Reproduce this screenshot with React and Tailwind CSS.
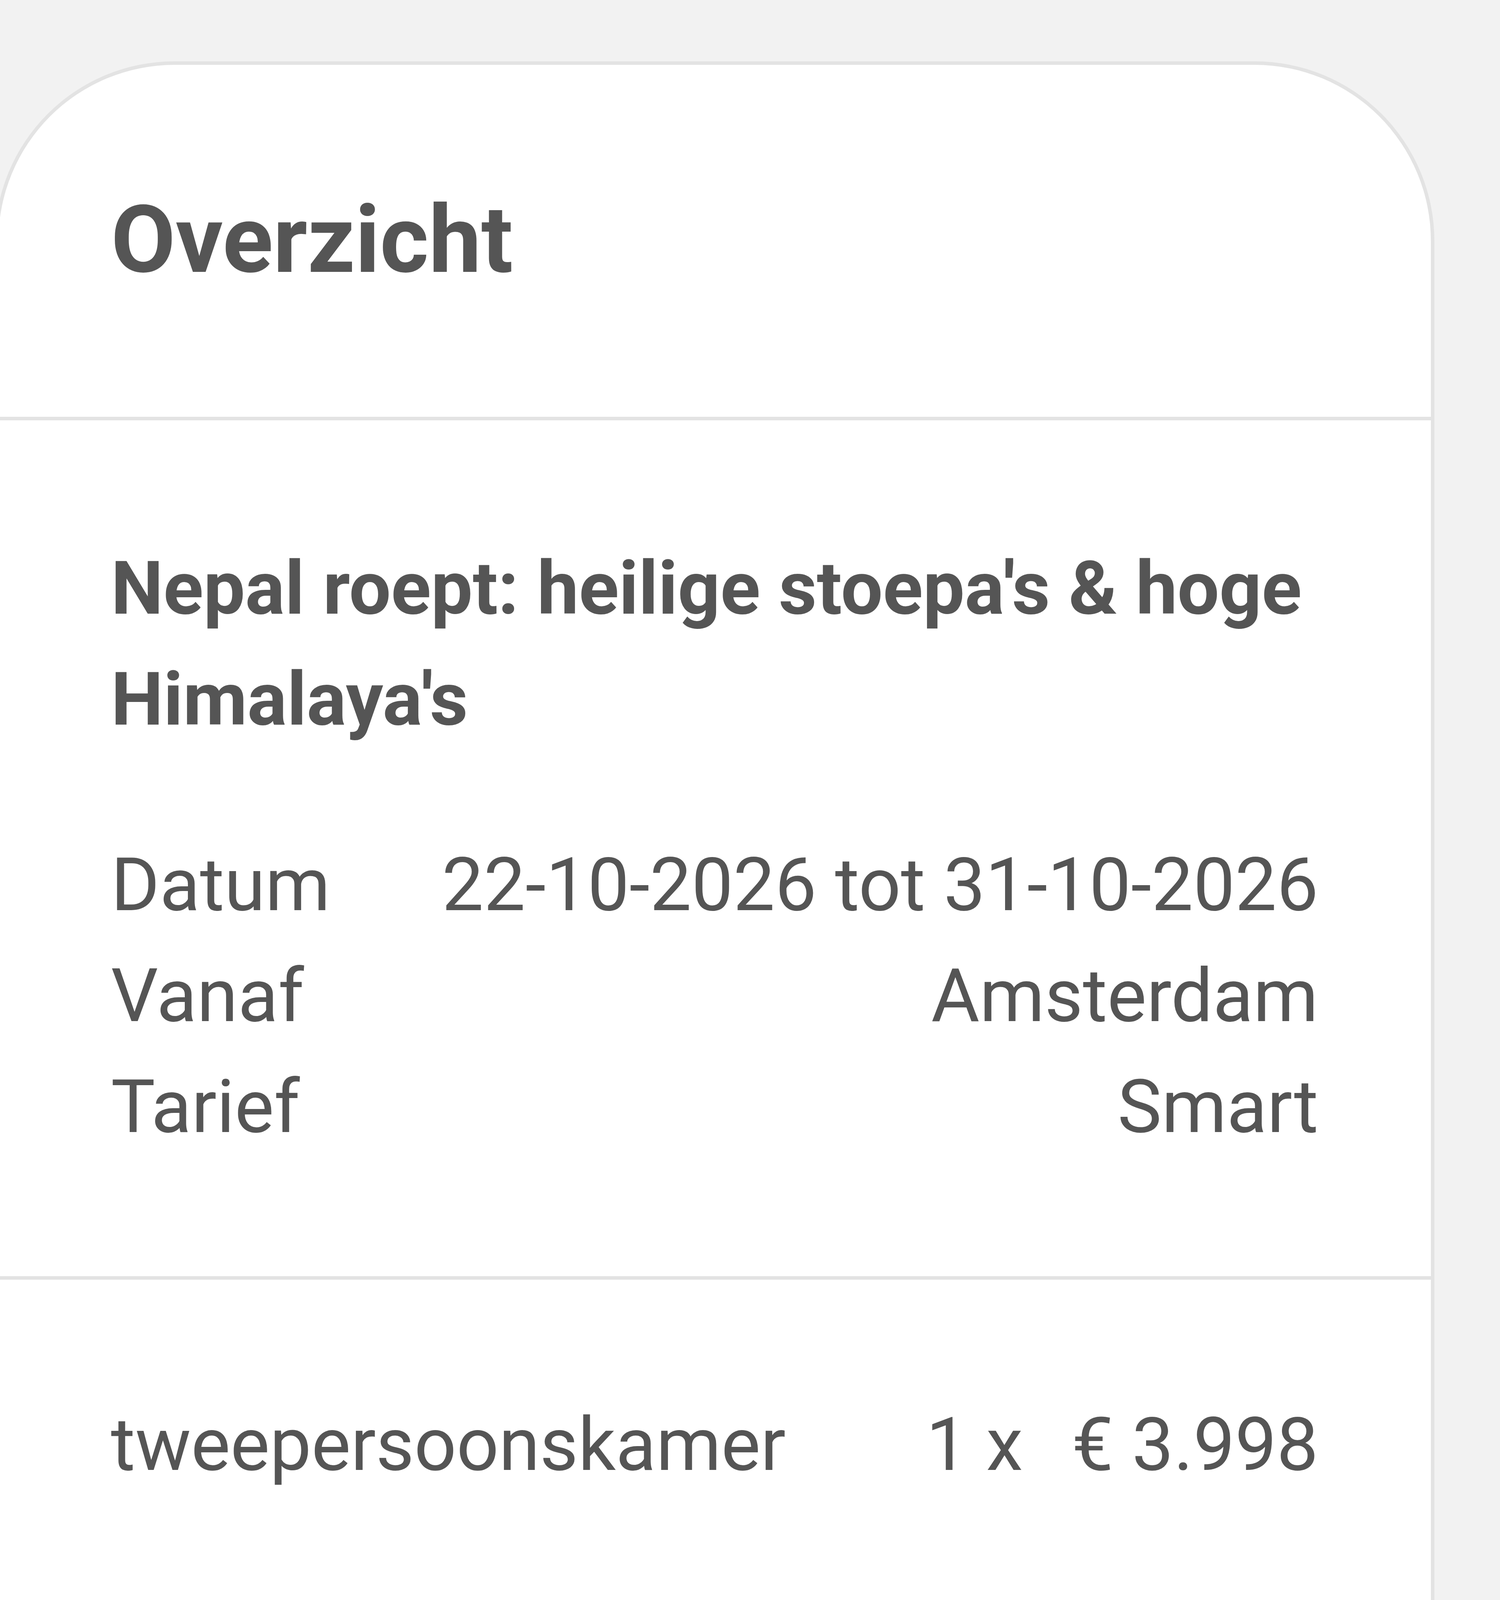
function InfoRow({ label, value }) {
    return (
        <div className="flex justify-between">
            <span>{label}</span>
            <span className="text-right">{value}</span>
        </div>
    );
}

function Chevron() {
    // thin down-chevron, drawn to match the accordion toggle
    return (
        <svg width="82" height="37" viewBox="0 0 82 37" fill="none" className="mr-[53px] mb-[80px] shrink-0">
            <polyline points="7,7 41,30 75,7" stroke="#555555" strokeWidth="14" strokeLinecap="round" strokeLinejoin="round" />
        </svg>
    );
}

export default function App() {
    return (
        <div className="min-h-screen bg-[#f2f2f2] pt-[157px] font-[Roboto,sans-serif] text-[#555555]">
            <div className="ml-[-13px] w-[3685px] rounded-t-[460px] border-[9px] border-b-0 border-[#e3e3e3] bg-white">
                <header className="border-b-[9px] border-[#e3e3e3] px-[288px] pt-[304px] pb-[309px]">
                    <h2 className="text-[240px] font-bold leading-[288px]">Overzicht</h2>
                </header>

                <section className="border-b-[9px] border-[#e3e3e3] px-[288px] pt-[288px] pb-[292px] text-[190px] leading-[284px]">
                    <h3 className="font-bold">Nepal roept: heilige stoepa's &amp; hoge Himalaya's</h3>
                    <div className="mt-[191px]">
                        <InfoRow label="Datum" value="22-10-2026 tot 31-10-2026" />
                        <InfoRow label="Vanaf" value="Amsterdam" />
                        <InfoRow label="Tarief" value="Smart" />
                    </div>
                </section>

                <section className="border-b-[9px] border-[#e3e3e3] px-[288px] pt-[280px] pb-[291px] text-[190px] leading-[284px]">
                    <div className="flex justify-between">
                        <span>tweepersoonskamer</span>
                        <div className="flex gap-[125px]">
                            <span>1 x</span>
                            <span>€ 3.998</span>
                        </div>
                    </div>
                </section>

                <section className="border-b-[9px] border-[#e3e3e3] px-[288px] pt-[283px] pb-[286px] text-[190px] leading-[284px]">
                    <button className="flex w-full items-center justify-between text-left">
                        <span>Voucher of actiecode</span>
                        <Chevron />
                    </button>
                </section>

                <section className="border-b-[9px] border-[#e3e3e3] px-[288px] pt-[282px] pb-[316px] text-[190px] leading-[284px]">
                    <div className="flex justify-between">
                        <span>Volwassenen</span>
                        <div className="flex gap-[313px]">
                            <span>2 x</span>
                            <span>€ 1.999</span>
                        </div>
                    </div>

                    <div className="mt-[121px] flex items-center justify-end gap-[96px]">
                        <span className="flex h-[236px] w-[513px] items-center justify-center rounded-full bg-[#4fc5d3] text-[145px] font-bold leading-none text-white">
                            -29%
                        </span>
                        <span className="line-through">€ 5.658</span>
                    </div>

                    <div className="mt-[43px] flex justify-between text-[240px] font-bold leading-[288px]">
                        <span>Totaal</span>
                        <span>€ 3.998</span>
                    </div>
                </section>

                <div className="h-[139px]" />
            </div>
        </div>
    );
}
